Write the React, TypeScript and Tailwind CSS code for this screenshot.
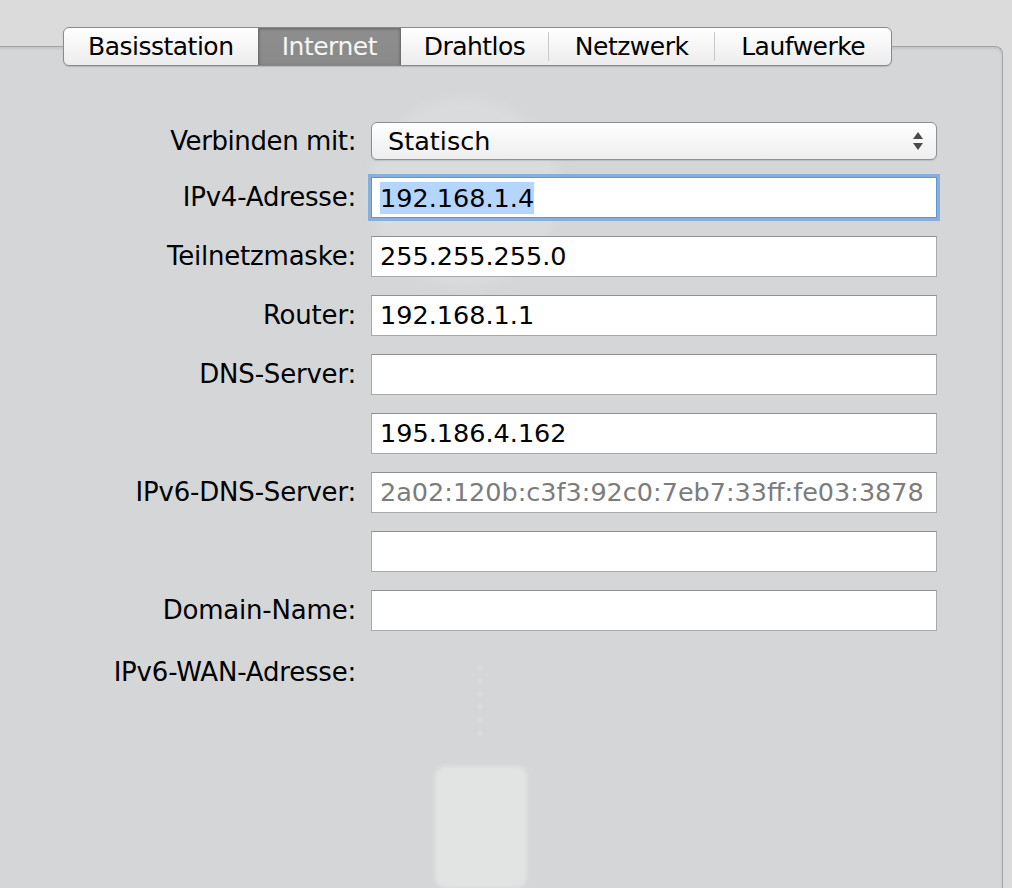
import React from "react";

const font = { fontFamily: '"DejaVu Sans", "Liberation Sans", sans-serif' };

const tabs = [
  { name: "Basisstation", w: "w-[194px]" },
  { name: "Internet", w: "w-[144px]", active: true },
  { name: "Drahtlos", w: "w-[147px]" },
  { name: "Netzwerk", w: "w-[167px]" },
  { name: "Laufwerke", w: "w-[177px]" },
];

const Field = ({ value, muted, focused }: { value?: string; muted?: boolean; focused?: boolean }) => (
  <div
    className={
      "h-[41px] w-[566px] bg-white border flex items-center px-[8px] text-[25.5px] " +
      (focused
        ? "border-[#5f95d3] shadow-[0_0_0_3px_rgba(110,160,220,0.75)]"
        : "border-[#a9a9a9] border-t-[#909090]") +
      (muted ? " text-[#7c7c7c]" : " text-black")
    }
  >
    {focused ? <span className="bg-[#b4d5fe] leading-[32px]">{value}</span> : value}
  </div>
);

const Label = ({ children }: { children?: React.ReactNode }) => (
  <div className="h-[41px] flex items-center justify-end text-[26px] tracking-[-0.2px] text-black">{children}</div>
);

const App = () => {
  return (
    <div className="relative w-[1012px] h-[888px] overflow-hidden bg-[#dbdbdb] pt-[27px]" style={font}>
      {/* tab bar */}
      <div className="relative z-10 ml-[63px] flex w-[829px] h-[39px] rounded-[6px] border border-[#8a8a8a] bg-gradient-to-b from-white to-[#ececec] shadow-[0_1px_1px_rgba(0,0,0,0.15)] overflow-hidden">
        {tabs.map((t, i) => (
          <div
            key={t.name}
            className={
              t.w +
              " flex items-center justify-center text-[25px] tracking-[-0.5px] " +
              (t.active
                ? "bg-gradient-to-b from-[#8e8e8e] to-[#8a8a8a] text-[#f5f5f5] border-x border-[#6f6f6f] shadow-[inset_0_1px_3px_rgba(0,0,0,0.3)]"
                : "text-black") +
              (i >= 3 ? " border-l border-[#c9c9c9] my-[4px]" : "")
            }
          >
            {t.name}
          </div>
        ))}
      </div>

      {/* panel */}
      <div className="relative -mt-[20px] -ml-[10px] mr-[9px] h-[900px] border-t border-r border-[#a3a3a3] rounded-tr-[8px] bg-[#d5d6d7] pl-[10px] pt-[75px] shadow-[inset_0_2px_3px_rgba(0,0,0,0.08)]">
        {/* ghost artwork behind the form */}
        <div className="absolute left-[380px] top-[50px] w-[190px] h-[190px] rounded-full bg-[#dadbdc] blur-[6px]" />
        <div className="absolute left-[487px] top-[618px] flex flex-col gap-[7px]">
          {[0, 1, 2, 3, 4, 5].map((d) => (
            <div key={d} className="w-[6px] h-[6px] rounded-full bg-[#dadbdb] blur-[1px]" />
          ))}
        </div>
        <div className="absolute left-[445px] top-[719px] w-[92px] h-[122px] rounded-[10px] bg-[#e2e3e3] blur-[2px]" />

        <div className="relative grid grid-cols-[356px_566px] gap-x-[15px] gap-y-[18px]">
          <div className="h-[38px] flex items-center justify-end text-[26px] tracking-[-0.4px] -mb-[1px]">Verbinden mit:</div>
          <div className="h-[38px] w-[566px] rounded-[6px] border border-[#8f8f8f] bg-gradient-to-b from-white to-[#eeeeee] shadow-[0_1px_1px_rgba(0,0,0,0.12)] flex items-center justify-between pl-[16px] pr-[12px] text-[25.5px] -mb-[1px]">
            <span>Statisch</span>
            <svg width="12" height="20" viewBox="0 0 12 20">
              <path d="M6 1 L11 8 L1 8 Z" fill="#4a4a4a" />
              <path d="M6 19 L11 12 L1 12 Z" fill="#4a4a4a" />
            </svg>
          </div>

          <Label>IPv4-Adresse:</Label>
          <Field value="192.168.1.4" focused />

          <Label>Teilnetzmaske:</Label>
          <Field value="255.255.255.0" />

          <Label>Router:</Label>
          <Field value="192.168.1.1" />

          <Label>DNS-Server:</Label>
          <Field />

          <Label />
          <Field value="195.186.4.162" />

          <Label>IPv6-DNS-Server:</Label>
          <Field value="2a02:120b:c3f3:92c0:7eb7:33ff:fe03:3878" muted />

          <Label />
          <Field />

          <Label>Domain-Name:</Label>
          <Field />

          <div className="mt-[3px]">
            <Label>IPv6-WAN-Adresse:</Label>
          </div>
          <div />
        </div>
      </div>
    </div>
  );
};

export default App;
